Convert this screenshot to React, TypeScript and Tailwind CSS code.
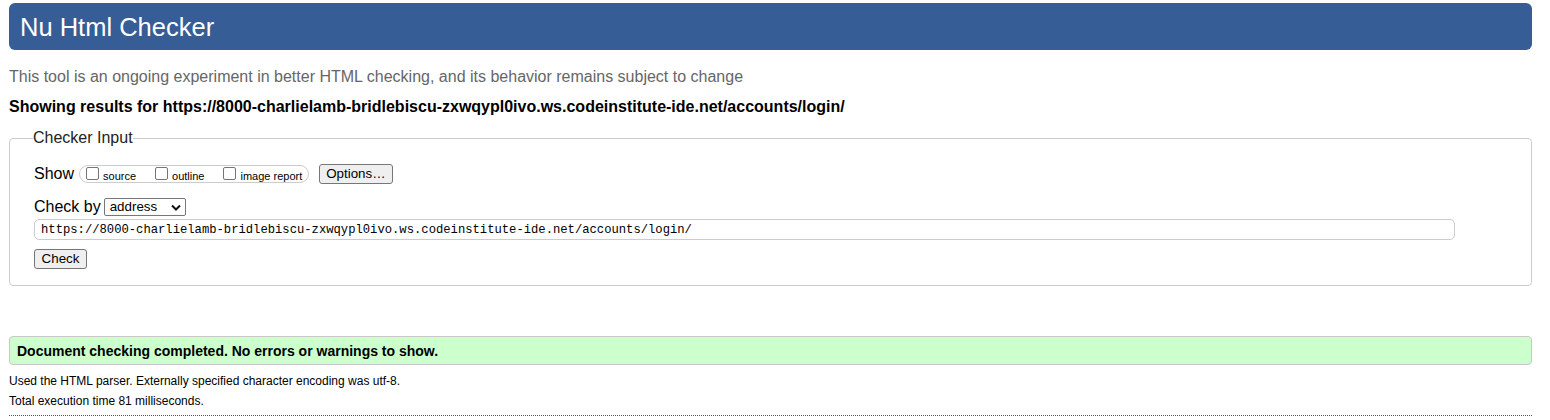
const url =
  "https://8000-charlielamb-bridlebiscu-zxwqypl0ivo.ws.codeinstitute-ide.net/accounts/login/";

const Box = ({ label }: { label: string }) => (
  <span className="flex items-start">
    <span className="mt-[1px] w-[13px] h-[13px] border border-[#767676] rounded-[2px] bg-white" />
    <span className="ml-[4px] text-[11px] leading-[14px] mt-[3px]">{label}</span>
  </span>
);

const App = () => {
  return (
    <div className="min-h-screen bg-white pl-[9px] pr-[18px] text-black font-['Liberation_Sans',Arial,sans-serif]">
      {/* Header */}
      <div className="mt-[3px] h-[47px] rounded-[6px] bg-[#365d95] flex items-center pl-[11px]">
        <h1 className="text-[25.5px] leading-[30px] text-white">Nu Html Checker</h1>
      </div>

      <p className="mt-[17px] text-[16px] leading-[20px] text-[#666]">
        This tool is an ongoing experiment in better HTML checking, and its behavior remains subject to change
      </p>
      <p className="mt-[10px] text-[16px] leading-[20px] font-bold">Showing results for {url}</p>

      {/* Checker input */}
      <fieldset className="mt-[11px] border border-[#ccc] rounded-[4px] pl-[24px] pr-[24px] pb-[15px]">
        <legend className="-ml-[1px] text-[16px] leading-[20px] text-[#222]">Checker Input</legend>

        <div className="mt-[16px] flex items-center">
          <span className="text-[16px] leading-[20px]">Show</span>
          <span className="ml-[5px] h-[18px] flex items-start gap-[19px] border border-[#ccc] rounded-full pl-[6px] pr-[6px]">
            <Box label="source" />
            <Box label="outline" />
            <Box label="image report" />
          </span>
          <button className="ml-[10px] h-[20px] px-[6px] bg-[#efefef] border border-[#767676] rounded-[3px] text-[13.33px] leading-[16px]">
            Options…
          </button>
        </div>

        <div className="mt-[13px] flex items-center">
          <span className="text-[16px] leading-[20px]">Check by</span>
          <span className="ml-[3px] w-[82px] h-[18px] flex items-center justify-between border border-[#767676] rounded-[2px] pl-[5px] pr-[4px] text-[13.33px] leading-[16px]">
            address
            <svg width="10" height="7" viewBox="0 0 10 7" fill="none">
              <path d="M1 1.5 5 5.5 9 1.5" stroke="#111" strokeWidth="2" />
            </svg>
          </span>
        </div>

        <div className="mt-[2px] w-[1421px] h-[21px] flex items-center border border-[#ccc] rounded-[5px] pl-[6px]">
          <span className="font-['Liberation_Mono','DejaVu_Sans_Mono',monospace] text-[12.2px] leading-[16px]">{url}</span>
        </div>

        <button className="mt-[9px] h-[20px] w-[53px] bg-[#efefef] border border-[#767676] rounded-[3px] text-[13.33px] leading-[16px]">
          Check
        </button>
      </fieldset>

      {/* Result */}
      <div className="mt-[50px] h-[29px] flex items-center bg-[#ccffcc] border border-[#c8c8c8] rounded-[4px] pl-[7px]">
        <span className="text-[14px] leading-[18px] font-bold">Document checking completed. No errors or warnings to show.</span>
      </div>
      <p className="mt-[6px] text-[12px] leading-[20px]">
        Used the HTML parser. Externally specified character encoding was utf-8.
      </p>
      <p className="text-[12px] leading-[20px]">Total execution time 81 milliseconds.</p>
      <div className="mt-[4px] border-t border-dotted border-[#555]" />
    </div>
  );
};

export default App;
